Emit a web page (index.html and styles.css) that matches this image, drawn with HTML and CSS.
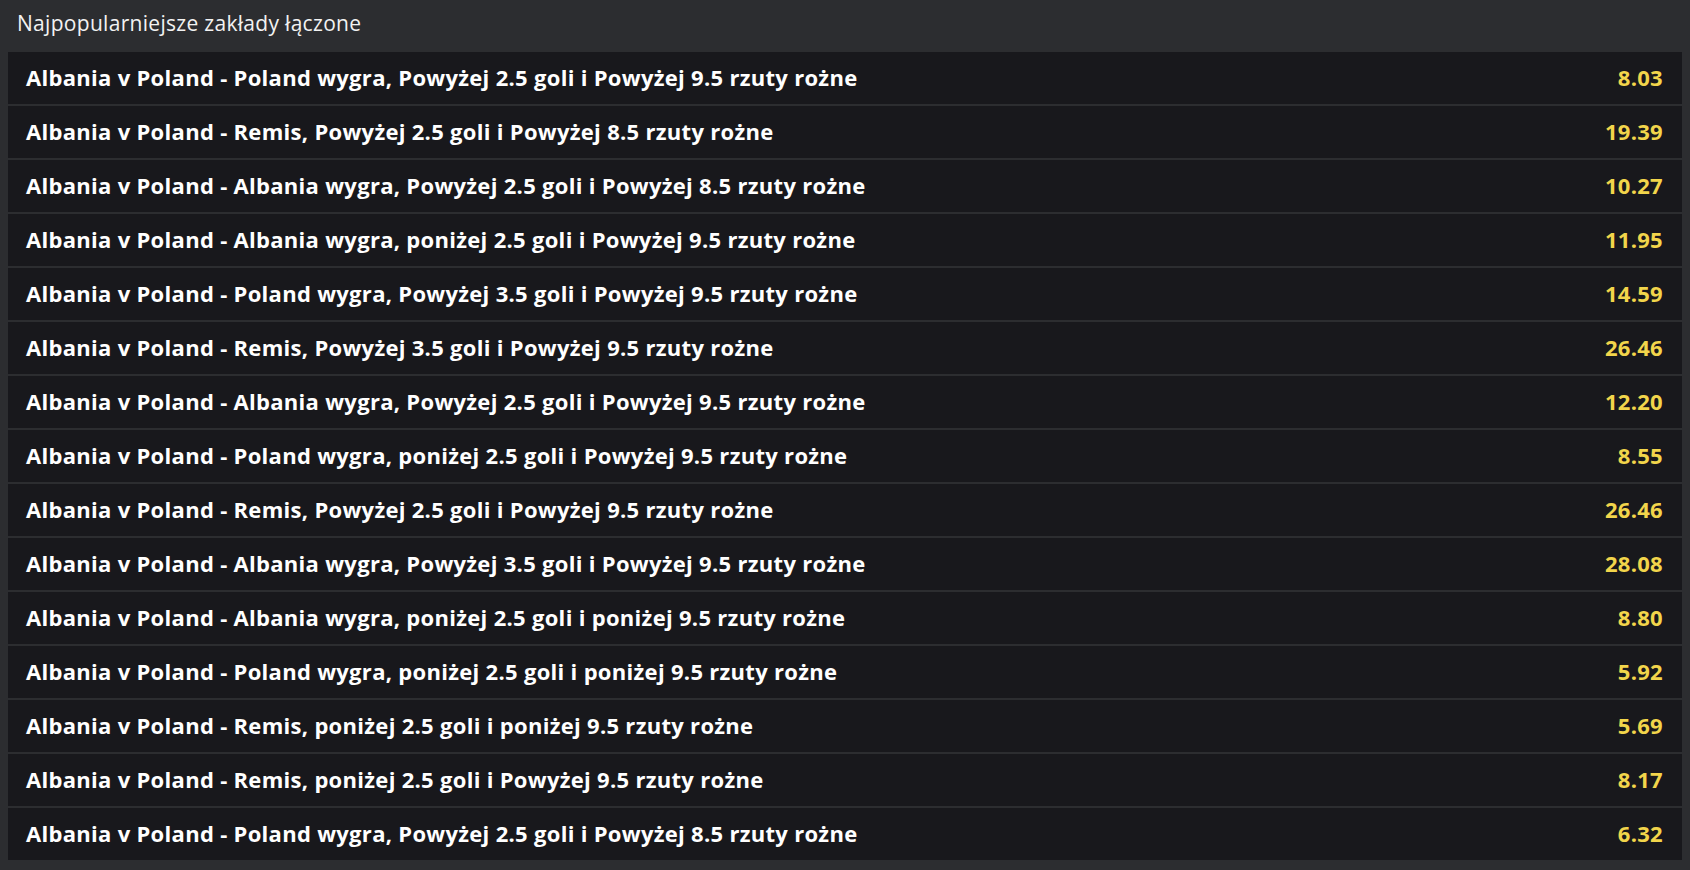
FILE: index.html
```html
<!DOCTYPE html>
<html lang="pl">
<head>
<meta charset="utf-8">
<title>Najpopularniejsze zakłady łączone</title>
<link rel="stylesheet" href="styles.css">
</head>
<body>
<section class="panel">
  <h2 class="panel-title">Najpopularniejsze zakłady łączone</h2>
  <ul class="bets">
    <li class="bet"><span class="bet-name">Albania v Poland - Poland wygra, Powyżej 2.5 goli i Powyżej 9.5 rzuty rożne</span><span class="bet-odds">8.03</span></li>
    <li class="bet"><span class="bet-name">Albania v Poland - Remis, Powyżej 2.5 goli i Powyżej 8.5 rzuty rożne</span><span class="bet-odds">19.39</span></li>
    <li class="bet"><span class="bet-name">Albania v Poland - Albania wygra, Powyżej 2.5 goli i Powyżej 8.5 rzuty rożne</span><span class="bet-odds">10.27</span></li>
    <li class="bet"><span class="bet-name">Albania v Poland - Albania wygra, poniżej 2.5 goli i Powyżej 9.5 rzuty rożne</span><span class="bet-odds">11.95</span></li>
    <li class="bet"><span class="bet-name">Albania v Poland - Poland wygra, Powyżej 3.5 goli i Powyżej 9.5 rzuty rożne</span><span class="bet-odds">14.59</span></li>
    <li class="bet"><span class="bet-name">Albania v Poland - Remis, Powyżej 3.5 goli i Powyżej 9.5 rzuty rożne</span><span class="bet-odds">26.46</span></li>
    <li class="bet"><span class="bet-name">Albania v Poland - Albania wygra, Powyżej 2.5 goli i Powyżej 9.5 rzuty rożne</span><span class="bet-odds">12.20</span></li>
    <li class="bet"><span class="bet-name">Albania v Poland - Poland wygra, poniżej 2.5 goli i Powyżej 9.5 rzuty rożne</span><span class="bet-odds">8.55</span></li>
    <li class="bet"><span class="bet-name">Albania v Poland - Remis, Powyżej 2.5 goli i Powyżej 9.5 rzuty rożne</span><span class="bet-odds">26.46</span></li>
    <li class="bet"><span class="bet-name">Albania v Poland - Albania wygra, Powyżej 3.5 goli i Powyżej 9.5 rzuty rożne</span><span class="bet-odds">28.08</span></li>
    <li class="bet"><span class="bet-name">Albania v Poland - Albania wygra, poniżej 2.5 goli i poniżej 9.5 rzuty rożne</span><span class="bet-odds">8.80</span></li>
    <li class="bet"><span class="bet-name">Albania v Poland - Poland wygra, poniżej 2.5 goli i poniżej 9.5 rzuty rożne</span><span class="bet-odds">5.92</span></li>
    <li class="bet"><span class="bet-name">Albania v Poland - Remis, poniżej 2.5 goli i poniżej 9.5 rzuty rożne</span><span class="bet-odds">5.69</span></li>
    <li class="bet"><span class="bet-name">Albania v Poland - Remis, poniżej 2.5 goli i Powyżej 9.5 rzuty rożne</span><span class="bet-odds">8.17</span></li>
    <li class="bet"><span class="bet-name">Albania v Poland - Poland wygra, Powyżej 2.5 goli i Powyżej 8.5 rzuty rożne</span><span class="bet-odds">6.32</span></li>
  </ul>
</section>
</body>
</html>
```

FILE: styles.css
```css
html, body {
  margin: 0;
  padding: 0;
  background: #2c2d30;
}

body {
  font-family: "Open Sans", "Noto Sans", sans-serif;
  color: #ffffff;
}

.panel {
  background: #2c2d30;
  padding: 0 8px 10px 8px;
}

.panel-title {
  margin: 0;
  height: 52px;
  box-sizing: border-box;
  padding: 8px 0 0 9px;
  font-size: 21px;
  line-height: 30px;
  font-weight: 400;
  letter-spacing: 0.3px;
  color: #f2f2f2;
}

.bets {
  list-style: none;
  margin: 0;
  padding: 0;
  display: flex;
  flex-direction: column;
  gap: 2px;
}

.bet {
  height: 52px;
  box-sizing: border-box;
  background: #18181c;
  display: flex;
  align-items: center;
  justify-content: space-between;
  padding: 0 19px 3px 18px;
}

.bet-name {
  font-size: 22px;
  font-weight: 700;
  letter-spacing: 0.3px;
  color: #ffffff;
}

.bet-odds {
  font-size: 22px;
  font-weight: 700;
  letter-spacing: 0.3px;
  color: #f2d54b;
}
```
